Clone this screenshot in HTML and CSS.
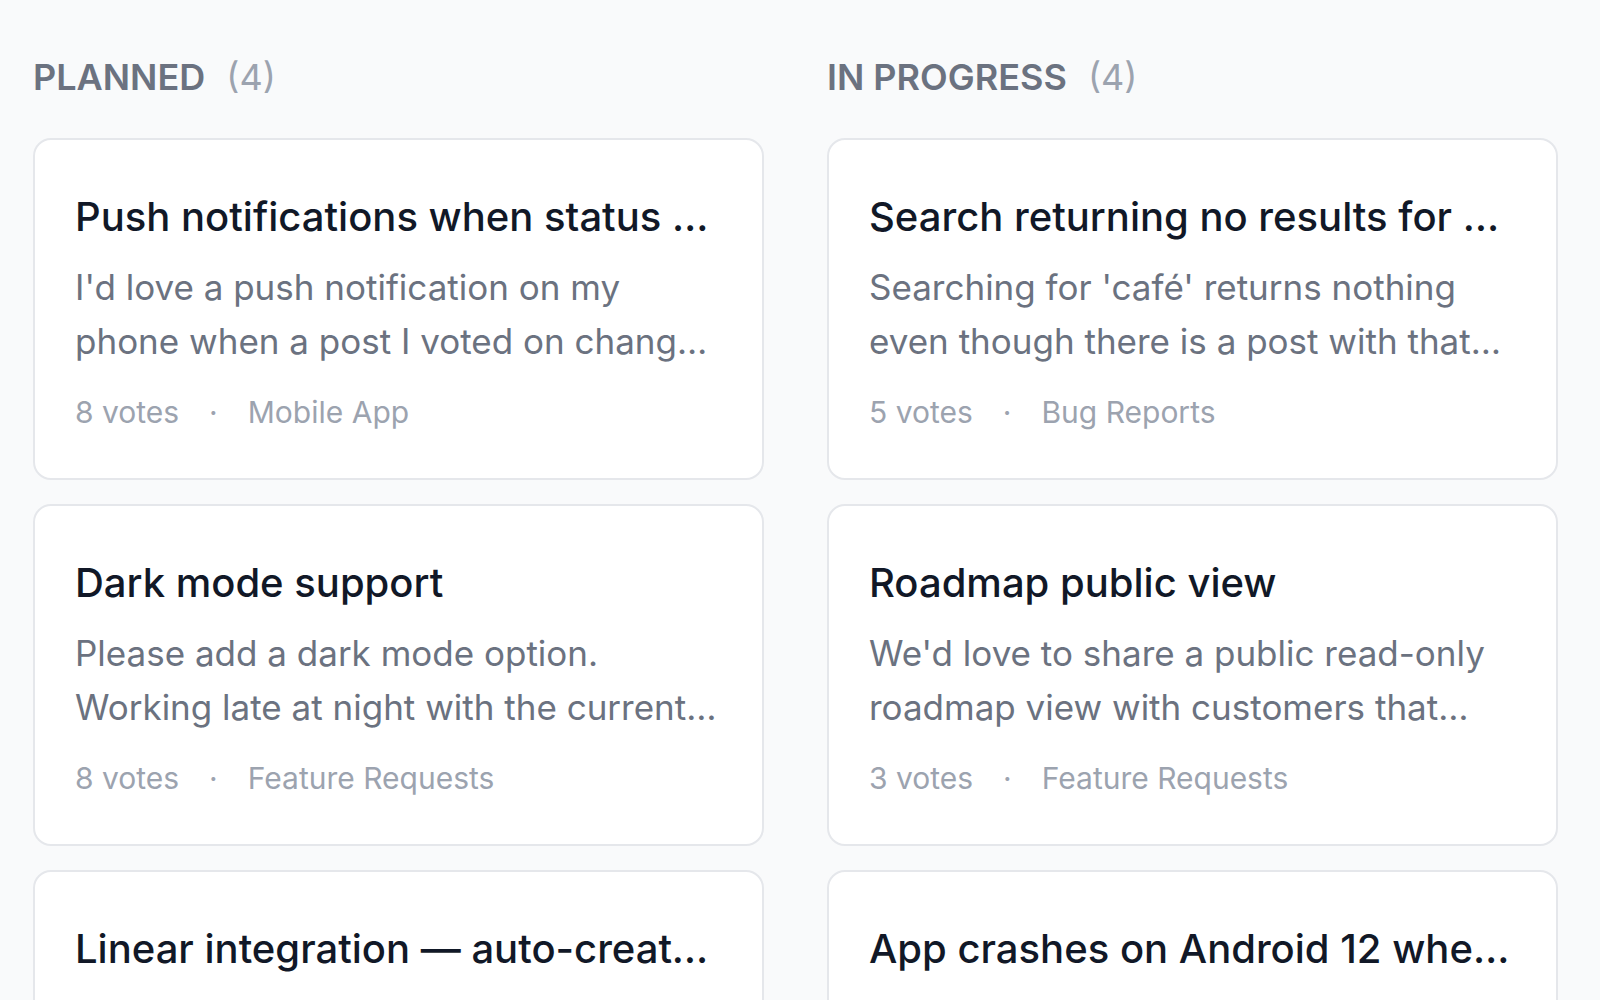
FILE: index.html
```html
<!DOCTYPE html>
<html lang="en">
<head>
    <meta charset="UTF-8">
    <meta name="viewport" content="width=device-width, initial-scale=1.0">
    <title>Roadmap</title>
    <link rel="stylesheet" href="styles.css">
</head>
<body>
    <div class="board">
        <section class="column">
            <h2 class="column-title">Planned <span class="column-count">(4)</span></h2>
            <div class="column-cards">
                <div class="card">
                    <h3 class="card-title">Push notifications when status changes on a post I voted on</h3>
                    <p class="card-desc">I'd love a push notification on my phone when a post I voted on changes status, so I know when the feature ships.</p>
                    <div class="card-meta"><span>8 votes</span><span class="dot">&middot;</span><span>Mobile App</span></div>
                </div>
                <div class="card">
                    <h3 class="card-title">Dark mode support</h3>
                    <p class="card-desc">Please add a dark mode option. Working late at night with the current bright theme is really hard on the eyes.</p>
                    <div class="card-meta"><span>8 votes</span><span class="dot">&middot;</span><span>Feature Requests</span></div>
                </div>
                <div class="card">
                    <h3 class="card-title">Linear integration &mdash; auto-create issues from posts</h3>
                    <p class="card-desc">When a post moves to Planned, automatically create a Linear issue and keep the status in sync both ways.</p>
                    <div class="card-meta"><span>6 votes</span><span class="dot">&middot;</span><span>Integrations</span></div>
                </div>
                <div class="card">
                    <h3 class="card-title">Export posts to CSV</h3>
                    <p class="card-desc">We need to export all posts with their votes and comments for our quarterly planning.</p>
                    <div class="card-meta"><span>4 votes</span><span class="dot">&middot;</span><span>Feature Requests</span></div>
                </div>
            </div>
        </section>

        <section class="column">
            <h2 class="column-title">In Progress <span class="column-count">(4)</span></h2>
            <div class="column-cards">
                <div class="card">
                    <h3 class="card-title">Search returning no results for accented characters</h3>
                    <p class="card-desc">Searching for 'café' returns nothing even though there is a post with that exact word in its title.</p>
                    <div class="card-meta"><span>5 votes</span><span class="dot">&middot;</span><span>Bug Reports</span></div>
                </div>
                <div class="card">
                    <h3 class="card-title">Roadmap public view</h3>
                    <p class="card-desc">We'd love to share a public read-only roadmap view with customers that doesn't require them to log in.</p>
                    <div class="card-meta"><span>3 votes</span><span class="dot">&middot;</span><span>Feature Requests</span></div>
                </div>
                <div class="card">
                    <h3 class="card-title">App crashes on Android 12 when opening a post</h3>
                    <p class="card-desc">Opening any post from the feed crashes the app immediately on my Pixel running Android 12.</p>
                    <div class="card-meta"><span>3 votes</span><span class="dot">&middot;</span><span>Bug Reports</span></div>
                </div>
                <div class="card">
                    <h3 class="card-title">Slack notifications for new posts</h3>
                    <p class="card-desc">Post a message to a Slack channel whenever a new post is submitted to a board.</p>
                    <div class="card-meta"><span>2 votes</span><span class="dot">&middot;</span><span>Integrations</span></div>
                </div>
            </div>
        </section>
    </div>
</body>
</html>
```

FILE: styles.css
```css
body {
    margin: 0;
    background-color: #f9fafb;
    font-family: Inter, "Noto Sans", sans-serif;
    overflow: hidden;
}

.board {
    display: flex;
    gap: 63px;
    padding: 56px 33px 0;
}

.column {
    flex: 0 0 731px;
    width: 731px;
}

.column-title {
    margin: 0 0 39px;
    font-size: 36px;
    line-height: 1.2;
    font-weight: 600;
    text-transform: uppercase;
    color: #6b7280;
}

.column-count {
    margin-left: 12px;
    font-weight: 400;
    color: #9ca3af;
}

.column-cards {
    display: flex;
    flex-direction: column;
    gap: 24px;
}

.card {
    background-color: #fff;
    border: 2px solid #e5e7eb;
    border-radius: 18px;
    padding: 49px 40px 43px;
}

.card-title {
    margin: 0;
    font-size: 40px;
    line-height: 56px;
    font-weight: 500;
    color: #111827;
    white-space: nowrap;
    overflow: hidden;
    text-overflow: ellipsis;
}

.card-desc {
    margin: 15px 0 0;
    font-size: 35px;
    line-height: 54px;
    color: #6b7280;
    display: -webkit-box;
    -webkit-line-clamp: 2;
    -webkit-box-orient: vertical;
    overflow: hidden;
}

.card-meta {
    display: flex;
    gap: 30px;
    margin-top: 22px;
    font-size: 30px;
    line-height: 45px;
    color: #9ca3af;
}
```
